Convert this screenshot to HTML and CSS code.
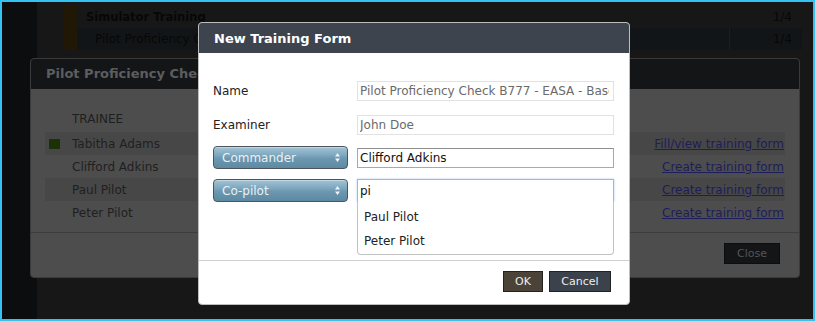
FILE: index.html
```html
<!DOCTYPE html>
<html lang="en">
<head>
  <meta charset="UTF-8" />
  <meta name="viewport" content="width=device-width, initial-scale=1.0"/>
  <title>New Training Form</title>
  <link rel="stylesheet" href="styles.css">
</head>
<body>

  <div class="screen">
    <aside class="sidebar"></aside>

    <main class="main">
      <div class="group">
        <div class="group-bar"></div>
        <div class="group-rows">
          <div class="list-row list-title">
            <span class="list-name">Simulator Training</span>
            <span class="list-count">1/4</span>
          </div>
          <div class="list-row list-sub">
            <span class="list-name">Pilot Proficiency Check B777 - EASA - Base</span>
            <span class="list-count">1/4</span>
          </div>
        </div>
      </div>
    </main>

    <!-- dimmed dialog underneath -->
    <section class="dialog dialog-back">
      <div class="back-header">Pilot Proficiency Check B777 - EASA - Base</div>
      <div class="back-body">
        <table class="trainees">
          <thead>
            <tr>
              <th class="mark"></th>
              <th>TRAINEE</th>
              <th></th>
            </tr>
          </thead>
          <tbody>
            <tr class="stripe">
              <td class="mark"><span class="status"></span></td>
              <td>Tabitha Adams</td>
              <td class="action"><a href="#">Fill/view training form</a></td>
            </tr>
            <tr>
              <td class="mark"></td>
              <td>Clifford Adkins</td>
              <td class="action"><a href="#">Create training form</a></td>
            </tr>
            <tr class="stripe">
              <td class="mark"></td>
              <td>Paul Pilot</td>
              <td class="action"><a href="#">Create training form</a></td>
            </tr>
            <tr>
              <td class="mark"></td>
              <td>Peter Pilot</td>
              <td class="action"><a href="#">Create training form</a></td>
            </tr>
          </tbody>
        </table>
      </div>
      <div class="back-footer">
        <button class="close-btn">Close</button>
      </div>
    </section>

    <!-- active dialog -->
    <section class="dialog dialog-front">
      <div class="front-header">New Training Form</div>
      <div class="front-body">
        <div class="form-row row-name">
          <label class="form-label">Name</label>
          <input class="field field-readonly" type="text" value="Pilot Proficiency Check B777 - EASA - Base" readonly />
        </div>
        <div class="form-row row-examiner">
          <label class="form-label">Examiner</label>
          <input class="field field-readonly" type="text" value="John Doe" readonly />
        </div>
        <div class="form-row row-role">
          <div class="form-label">
            <div class="role-select">
              <span>Commander</span>
              <svg class="arrows" width="7" height="11" viewBox="0 0 7 11"><path d="M3.5 1 L6 4.5 L1 4.5 Z M1 6.5 L6 6.5 L3.5 10 Z" fill="#eef4f7"/></svg>
            </div>
          </div>
          <input class="field" type="text" value="Clifford Adkins" />
        </div>
        <div class="form-row row-role row-last">
          <div class="form-label">
            <div class="role-select">
              <span>Co-pilot</span>
              <svg class="arrows" width="7" height="11" viewBox="0 0 7 11"><path d="M3.5 1 L6 4.5 L1 4.5 Z M1 6.5 L6 6.5 L3.5 10 Z" fill="#eef4f7"/></svg>
            </div>
          </div>
          <div class="field-wrap">
            <input class="field field-focus" type="text" value="pi" />
            <ul class="suggest">
              <li>Paul Pilot</li>
              <li>Peter Pilot</li>
            </ul>
          </div>
        </div>
      </div>
      <div class="front-footer">
        <button class="btn btn-ok">OK</button>
        <button class="btn btn-cancel">Cancel</button>
      </div>
    </section>
  </div>

</body>
</html>
```

FILE: styles.css
```css
* {
  box-sizing: border-box;
  margin: 0;
  padding: 0;
}

body {
  font-family: "DejaVu Sans", "Liberation Sans", sans-serif;
  font-size: 12px;
  background-color: #34c3f1;
  width: 815px;
  height: 321px;
  overflow: hidden;
}

.screen {
  position: relative;
  margin: 2px;
  width: 811px;
  height: 317px;
  background-color: #171717;
  display: flex;
  overflow: hidden;
}

.sidebar {
  width: 35px;
  background-color: #0c0d0f;
}

.main {
  flex: 1;
  padding: 3px 11px 0 27px;
}

/* background list */

.group {
  display: flex;
  height: 45px;
}

.group-bar {
  width: 13px;
  background-color: #201805;
}

.group-rows {
  flex: 1;
  display: flex;
  flex-direction: column;
}

.list-row {
  display: flex;
  align-items: center;
  color: #070707;
  white-space: nowrap;
  overflow: hidden;
}

.list-title {
  height: 23px;
  font-weight: bold;
  font-size: 11.5px;
  padding-left: 9px;
}

.list-sub {
  height: 22px;
  background-color: #121517;
  padding-left: 18px;
}

.list-name {
  flex: 1;
}

.list-count {
  width: 73px;
  height: 100%;
  display: flex;
  align-items: center;
  justify-content: flex-end;
  padding-right: 10px;
  font-weight: normal;
  font-size: 12px;
}

.list-sub .list-count {
  border-left: 1px solid #1c1f21;
}

/* dialogs */

.dialog {
  position: absolute;
  border-radius: 4px;
  overflow: hidden;
}

.dialog-back {
  left: 28px;
  top: 56px;
  width: 770px;
  height: 220px;
  border: 1px solid #3a3a3a;
  background-color: #4d4d4d;
}

.back-header {
  height: 30px;
  background-color: #131517;
  color: #5b5e61;
  font-weight: bold;
  font-size: 13px;
  padding-left: 15px;
  line-height: 30px;
  white-space: nowrap;
}

.back-body {
  padding: 18px 14px 8px 14px;
}

.trainees {
  width: 100%;
  border-collapse: collapse;
  color: #1f1f1f;
}

.trainees th {
  height: 25px;
  text-align: left;
  font-weight: normal;
  padding-bottom: 2px;
}

.trainees td {
  height: 23px;
}

.trainees .mark {
  width: 27px;
  padding-left: 4px;
}

.trainees .stripe {
  background-color: #474747;
}

.status {
  display: block;
  width: 11px;
  height: 10px;
  background-color: #1a3206;
}

.trainees .action {
  text-align: right;
  padding-right: 1px;
}

.trainees a {
  color: #1d1d5c;
}

.back-footer {
  border-top: 1px solid #3d3d3d;
  display: flex;
  justify-content: flex-end;
  padding: 10px 19px 0 0;
}

.close-btn {
  width: 56px;
  height: 21px;
  background-color: #131517;
  border: 1px solid #0d0d0d;
  color: #555;
  font-family: inherit;
  font-size: 11px;
}

.dialog-front {
  left: 196px;
  top: 20px;
  width: 432px;
  height: 283px;
  border: 1px solid #bdbdbd;
  background-color: #fff;
}

.front-header {
  height: 30px;
  background-color: #3d444d;
  color: #fff;
  font-weight: bold;
  font-size: 13px;
  line-height: 31px;
  padding-left: 15px;
}

.front-body {
  padding: 28px 15px 58px 14px;
  display: flex;
  flex-direction: column;
}

.form-row {
  display: flex;
  align-items: center;
  height: 20px;
  color: #222;
}

.row-name {
  margin-bottom: 14px;
}

.row-examiner {
  margin-bottom: 11px;
}

.row-role {
  height: 23px;
  margin-bottom: 10px;
}

.row-role.row-last {
  margin-bottom: 0;
}

.form-label {
  width: 144px;
}

.field {
  width: 257px;
  height: 20px;
  border: 1px solid #a9a9a9;
  border-top-color: #8f8f8f;
  padding: 0 4px 0 2px;
  font-family: inherit;
  font-size: 12px;
  color: #111;
  outline: none;
}

.field-readonly {
  border: 1px solid #e2e2e2;
  color: #6a6a6a;
}

.field-wrap {
  position: relative;
  height: 23px;
}

.field-focus {
  height: 23px;
  border: 1px solid #8ebce6;
  box-shadow: 0 0 2px #a9d0f2;
}

.suggest {
  position: absolute;
  left: 0;
  top: 22px;
  width: 257px;
  list-style: none;
  background-color: #fff;
  border: 1px solid #c2c2c2;
  border-top: none;
  border-radius: 0 0 4px 4px;
  padding: 4px 0 1px;
  color: #222;
}

.suggest li {
  height: 24px;
  line-height: 24px;
  padding-left: 6px;
}

.role-select {
  width: 135px;
  height: 23px;
  border: 1px solid #4e5459;
  border-radius: 4px;
  background: linear-gradient(#a3c4d6 0%, #7da6bd 40%, #6c97b0 55%, #5e89a2 100%);
  color: #e9f1f5;
  display: flex;
  align-items: center;
  justify-content: space-between;
  padding: 0 6px 0 8px;
  box-shadow: inset 0 1px 0 rgba(255, 255, 255, 0.35);
}

.arrows {
  display: block;
}

.front-footer {
  border-top: 1px solid #cfcfcf;
  display: flex;
  justify-content: flex-end;
  gap: 6px;
  padding: 10px 18px 0 0;
}

.btn {
  height: 21px;
  border: 1px solid #222;
  color: #eee;
  font-family: inherit;
  font-size: 11px;
  padding: 0 11px;
}

.btn-ok {
  width: 40px;
  background-color: #4b4238;
}

.btn-cancel {
  width: 62px;
  background-color: #3b424b;
}
```
